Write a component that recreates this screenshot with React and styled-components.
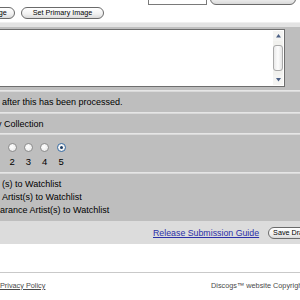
import React from 'react';
import styled, { createGlobalStyle } from 'styled-components';

const Global = createGlobalStyle`
  html, body {
    margin: 0;
    padding: 0;
    background: #fff;
    overflow: hidden;
  }
  body {
    font-family: "Liberation Sans", Arial, sans-serif;
    color: #000;
  }
`;

const Page = styled.div`
  width: 300px;
  height: 300px;
  overflow: hidden;
  display: flex;
  flex-direction: column;
`;

const ImageArea = styled.div`
  height: 22px;
  background: #fff;
  display: flex;
  flex-direction: column;
`;

const FileRow = styled.div`
  height: 5px;
  display: flex;
  align-items: flex-end;
  gap: 3px;
  padding-left: 148px;
`;

const FileBox = styled.div`
  width: 57px;
  height: 16px;
  flex-shrink: 0;
  border: 1px solid #7a7a7a;
  background: #fff;
`;

const Button = styled.button`
  font-family: "Liberation Sans", Arial, sans-serif;
  font-size: 7.2px;
  height: ${p => p.$h || 12}px;
  padding: 0 ${p => p.$pad || 11}px;
  border: 1px solid #6a6a6a;
  border-radius: 6px;
  background: linear-gradient(#ffffff, #f1f1f1 60%, #d9d9d9);
  color: #000;
  line-height: 10px;
  white-space: nowrap;
  flex-shrink: 0;
  cursor: pointer;
`;

const ButtonRow = styled.div`
  display: flex;
  gap: 6px;
  margin-top: 2px;
  margin-left: -44px;
`;

const Divider = styled.div`
  height: ${p => p.$h || 2}px;
  background: ${p => p.$color || '#d9d9d9'};
  border-top: 1px solid ${p => p.$top || '#e6e6e6'};
  box-sizing: border-box;
`;

const Row = styled.div`
  background: #bebebe;
  height: ${p => p.$h}px;
  box-sizing: border-box;
  font-size: 9px;
`;

const TextRow = styled(Row)`
  display: flex;
  align-items: center;
  padding-left: ${p => p.$indent ?? 2}px;
  white-space: nowrap;
`;

const Clipped = styled.span`
  margin-left: -3px;
`;

const NoteRow = styled(Row)`
  padding: 2px 0 3px;
`;

const TextBox = styled.div`
  width: 287px;
  height: 58px;
  margin-left: -2px;
  box-sizing: border-box;
  border: 1px solid #6e6e6e;
  background: #fff;
  display: flex;
  justify-content: flex-end;
  padding: 1px;
`;

const Scrollbar = styled.div`
  width: 10px;
  display: flex;
  flex-direction: column;
  background: #f1f1ee;
  gap: 1px;
`;

const Arrow = styled.div`
  height: 10px;
  display: flex;
  align-items: center;
  justify-content: center;
  background: #f4f4f2;
`;

const Thumb = styled.div`
  flex: 1;
  margin: 3px 0;
  border: 1px solid #a9a9a9;
  border-radius: 3px;
  background: linear-gradient(90deg, #e9e9e9, #fdfdfd 50%, #e4e4e4);
`;

const RadioRow = styled(Row)`
  display: flex;
  padding: 8px 0 0 4px;
`;

const RadioCol = styled.div`
  width: 16.3px;
  display: flex;
  flex-direction: column;
  align-items: center;
  gap: 4px;
`;

const Radio = styled.span`
  width: 9px;
  height: 9px;
  border-radius: 50%;
  box-sizing: border-box;
  border: 1px solid ${p => (p.$on ? '#3a6ea5' : '#8d8d8d')};
  background: radial-gradient(circle at 40% 40%, #ffffff, #e4e4e4);
  display: flex;
  align-items: center;
  justify-content: center;
  &::after {
    content: '';
    width: 3px;
    height: 3px;
    border-radius: 50%;
    background: ${p => (p.$on ? '#1c3c64' : 'transparent')};
  }
`;

const RadioLabel = styled.span`
  font-size: 9.5px;
  line-height: 11px;
`;

const WatchRow = styled(Row)`
  padding: 4px 0 4px 2px;
  display: flex;
  flex-direction: column;
`;

const WatchLine = styled.div`
  height: 13px;
  line-height: 13px;
  white-space: nowrap;
  margin-left: ${p => p.$shift || 0}px;
`;

const SaveBar = styled.div`
  height: 23px;
  background: #dcdcdc;
  display: flex;
  align-items: center;
  padding-left: 153px;
  gap: 9px;
`;

const GuideLink = styled.a`
  font-size: 8.8px;
  color: #2b2fa8;
  text-decoration: underline;
  white-space: nowrap;
`;

const Blank = styled.div`
  height: 28px;
  background: #fff;
  border-bottom: 1px solid #c9c9c9;
`;

const Footer = styled.div`
  display: grid;
  grid-template-columns: 211px auto;
  align-items: center;
  height: 24px;
  font-size: 7.3px;
  color: #4a4a4a;
  white-space: nowrap;
`;

const FooterLink = styled.a`
  color: #4a4a4a;
  text-decoration: underline;
`;

const ArrowIcon = ({ down }) => (
  <svg width="5" height="4" viewBox="0 0 5 4">
    <path d={down ? 'M0 0 H5 L2.5 3.5 Z' : 'M0 3.5 H5 L2.5 0 Z'} fill="#4d6185" />
  </svg>
);

export default function App() {
  return (
    <Page>
      <Global />
      <ImageArea>
        <FileRow>
          <FileBox />
          <Button $h={16} $pad={18}>Durchsuchen...</Button>
        </FileRow>
        <ButtonRow>
          <Button $pad={7}>Delete Image</Button>
          <Button>Set Primary Image</Button>
        </ButtonRow>
      </ImageArea>
      <Divider $h={5} $color="#e3e3e3" $top="#efefef" />
      <NoteRow $h={63}>
        <TextBox>
          <Scrollbar>
            <Arrow><ArrowIcon /></Arrow>
            <Thumb />
            <Arrow><ArrowIcon down /></Arrow>
          </Scrollbar>
        </TextBox>
      </NoteRow>
      <Divider />
      <TextRow $h={20}>after this has been processed.</TextRow>
      <Divider />
      <TextRow $h={19} $indent={0}>
        <Clipped>y Collection</Clipped>
      </TextRow>
      <Divider />
      <RadioRow $h={37}>
        {[2, 3, 4, 5].map(n => (
          <RadioCol key={n}>
            <Radio $on={n === 5} />
            <RadioLabel>{n}</RadioLabel>
          </RadioCol>
        ))}
      </RadioRow>
      <Divider />
      <WatchRow $h={47}>
        <WatchLine>(s) to Watchlist</WatchLine>
        <WatchLine>Artist(s) to Watchlist</WatchLine>
        <WatchLine $shift={-2}>arance Artist(s) to Watchlist</WatchLine>
      </WatchRow>
      <SaveBar>
        <GuideLink href="#">Release Submission Guide</GuideLink>
        <Button $pad={4}>Save Draft</Button>
      </SaveBar>
      <Blank />
      <Footer>
        <FooterLink href="#">Privacy Policy</FooterLink>
        <span>Discogs™ website Copyright</span>
      </Footer>
    </Page>
  );
}
